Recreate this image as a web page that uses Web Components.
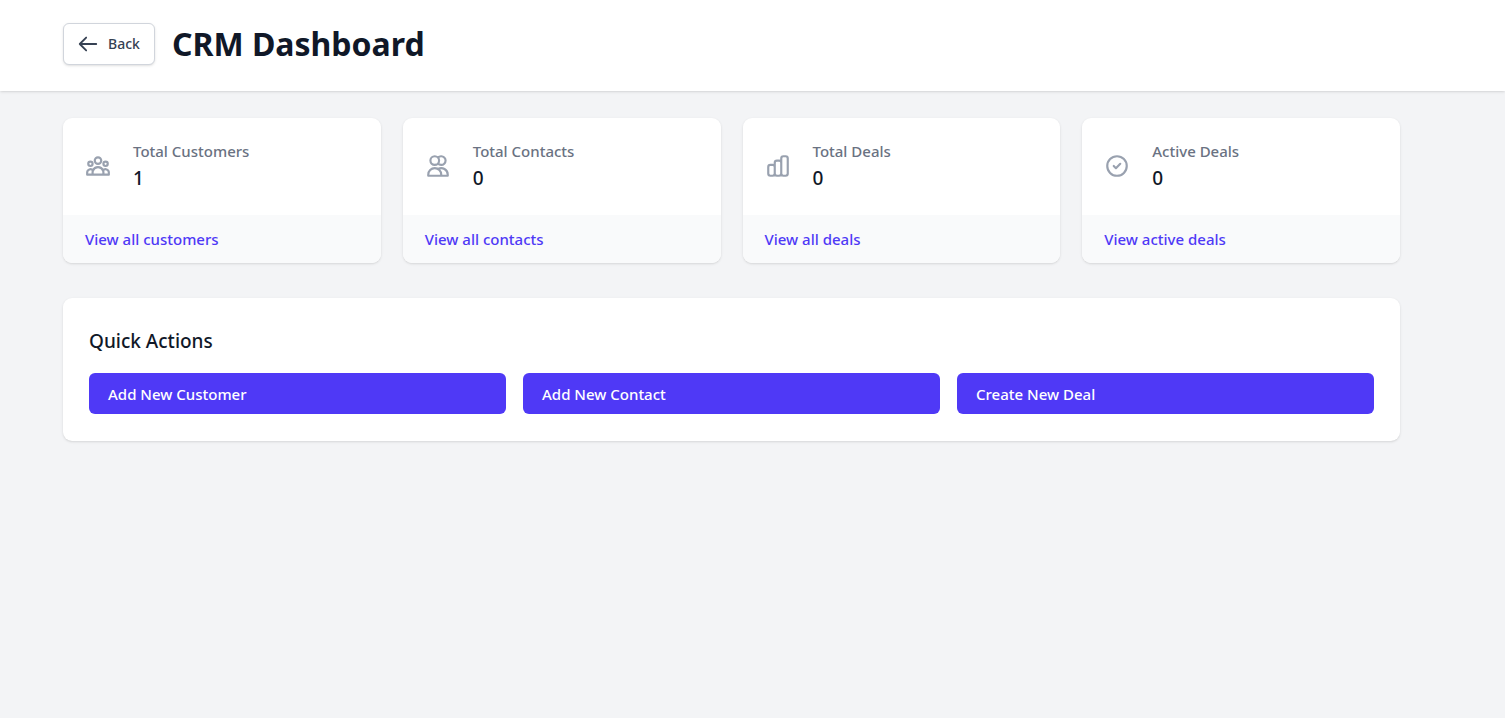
<!DOCTYPE html>
<html lang="en">
<head>
<meta charset="utf-8">
<meta name="viewport" content="width=device-width, initial-scale=1">
<title>CRM Dashboard</title>
<style>
  body {
    margin: 0;
    min-height: 100vh;
    background: #f3f4f6;
    color: #101828;
    font-family: "Segoe UI", "Noto Sans", "Open Sans", sans-serif;
    font-size: 15px;
    line-height: 22px;
    --accent: #4f39f6;
    --muted: #6a7282;
    --icon: #99a1af;
    --shadow: 0 1px 3px rgb(0 0 0 / 10%), 0 1px 2px -1px rgb(0 0 0 / 10%);
    --gutter-left: 63px;
    --gutter-right: 105px;
  }
</style>
</head>
<body>
<crm-dashboard></crm-dashboard>

<script>
  const icons = {
    back: 'M10 19l-7-7m0 0l7-7m-7 7h18',
    group: 'M17 20h5v-2a3 3 0 00-5.356-1.857M17 20H7m10 0v-2c0-.656-.126-1.283-.356-1.857M7 20H2v-2a3 3 0 015.356-1.857M7 20v-2c0-.656.126-1.283.356-1.857m0 0a5.002 5.002 0 019.288 0M15 7a3 3 0 11-6 0 3 3 0 016 0zm6 3a2 2 0 11-4 0 2 2 0 014 0zM7 10a2 2 0 11-4 0 2 2 0 014 0z',
    people: 'M12 4.354a4 4 0 110 5.292M15 21H3v-1a6 6 0 0112 0v1zm0 0h6v-1a6 6 0 00-9-5.197M13 7a4 4 0 11-8 0 4 4 0 018 0z',
    chart: 'M9 19v-6a2 2 0 00-2-2H5a2 2 0 00-2 2v6a2 2 0 002 2h2a2 2 0 002-2zm0 0V9a2 2 0 012-2h2a2 2 0 012 2v10m-6 0a2 2 0 002 2h2a2 2 0 002-2m0 0V5a2 2 0 012-2h2a2 2 0 012 2v14a2 2 0 01-2 2h-2a2 2 0 01-2-2z',
    check: 'M9 12l2 2 4-4m6 2a9 9 0 11-18 0 9 9 0 0118 0z'
  };

  class Base extends HTMLElement {
    connectedCallback() {
      if (!this.shadowRoot) this.attachShadow({ mode: 'open' }).innerHTML = this.render();
    }
  }

  customElements.define('crm-icon', class extends Base {
    render() {
      return `<style>
        :host { display: block; flex: none; width: 26px; height: 26px; }
        svg { display: block; width: 100%; height: 100%; }
      </style>
      <svg viewBox="0 0 24 24" fill="none" stroke="currentColor" stroke-width="2" stroke-linecap="round" stroke-linejoin="round" aria-hidden="true"><path d="${icons[this.getAttribute('name')]}"/></svg>`;
    }
  });

  customElements.define('crm-header', class extends Base {
    render() {
      return `<style>
        :host { display: block; background: #fff; box-shadow: var(--shadow); }
        header { display: flex; align-items: center; gap: 17px;
          padding: 23px var(--gutter-right) 26px var(--gutter-left); }
        button { display: flex; align-items: center; gap: 9px; height: 42px; padding: 0 14px 0 13px;
          border: 1px solid #d1d5dc; border-radius: 6px; background: #fff; color: #364153;
          box-shadow: var(--shadow); font: inherit; font-size: 14px; font-weight: 500; cursor: pointer; }
        crm-icon { width: 22px; height: 22px; }
        h1 { margin: 0; font-size: 32px; line-height: 40px; font-weight: 700; }
      </style>
      <header>
        <button type="button"><crm-icon name="back"></crm-icon>Back</button>
        <h1><slot></slot></h1>
      </header>`;
    }
  });

  customElements.define('stat-card', class extends Base {
    render() {
      return `<style>
        :host { display: block; overflow: hidden; border-radius: 9px; background: #fff; box-shadow: var(--shadow); }
        .body { display: flex; align-items: center; gap: 22px; padding: 21px 22px 23px; }
        crm-icon { color: var(--icon); }
        dl { margin: 0; min-width: 0; font-weight: 500; }
        dt { color: var(--muted); line-height: 25px; }
        dd { margin: 0; font-size: 19px; line-height: 28px; }
        .foot { padding: 13px 22px; background: #f9fafb; }
        a { color: var(--accent); font-weight: 500; text-decoration: none; }
      </style>
      <div class="body">
        <crm-icon name="${this.getAttribute('icon')}"></crm-icon>
        <dl><dt>${this.getAttribute('label')}</dt><dd>${this.getAttribute('value')}</dd></dl>
      </div>
      <div class="foot"><a href="${this.getAttribute('href')}"><slot></slot></a></div>`;
    }
  });

  customElements.define('action-link', class extends Base {
    render() {
      return `<style>
        :host { display: block; }
        a { display: block; padding: 10px 19px 9px; border-radius: 6px; background: var(--accent);
          color: #fff; font-weight: 500; text-decoration: none; }
      </style>
      <a href="${this.getAttribute('href')}"><slot></slot></a>`;
    }
  });

  customElements.define('quick-actions', class extends Base {
    render() {
      return `<style>
        :host { display: block; padding: 30px 26px 27px; border-radius: 9px; background: #fff; box-shadow: var(--shadow); }
        h2 { margin: 0 0 19px; font-size: 19px; line-height: 26px; font-weight: 500; }
        .grid { display: grid; grid-template-columns: repeat(auto-fit, minmax(220px, 1fr)); gap: 17px; }
      </style>
      <h2>Quick Actions</h2>
      <div class="grid"><slot></slot></div>`;
    }
  });

  customElements.define('crm-dashboard', class extends Base {
    render() {
      return `<style>
        :host { display: block; }
        main { padding: 27px var(--gutter-right) 27px var(--gutter-left); display: grid; gap: 35px; }
        .stats { display: grid; grid-template-columns: repeat(auto-fit, minmax(240px, 1fr)); gap: 22px; }
      </style>
      <crm-header>CRM Dashboard</crm-header>
      <main>
        <div class="stats">
          <stat-card icon="group" label="Total Customers" value="1" href="#customers">View all customers</stat-card>
          <stat-card icon="people" label="Total Contacts" value="0" href="#contacts">View all contacts</stat-card>
          <stat-card icon="chart" label="Total Deals" value="0" href="#deals">View all deals</stat-card>
          <stat-card icon="check" label="Active Deals" value="0" href="#active">View active deals</stat-card>
        </div>
        <quick-actions>
          <action-link href="#new-customer">Add New Customer</action-link>
          <action-link href="#new-contact">Add New Contact</action-link>
          <action-link href="#new-deal">Create New Deal</action-link>
        </quick-actions>
      </main>`;
    }
  });
</script>
</body>
</html>
